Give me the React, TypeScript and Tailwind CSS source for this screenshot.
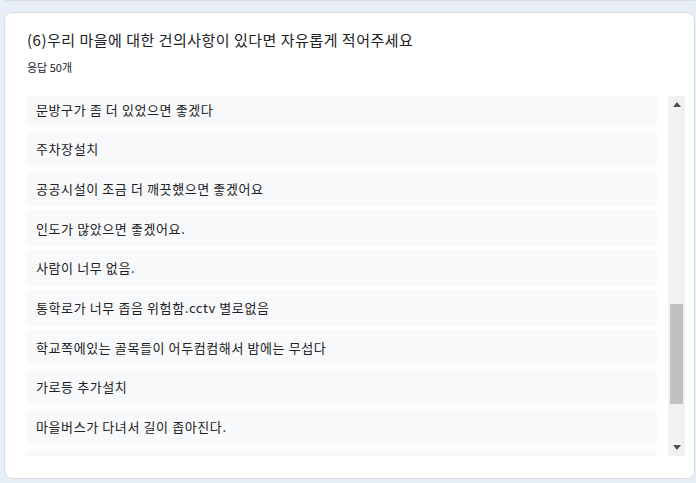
const answers: string[] = [
  '문방구가 좀 더 있었으면 좋겠다',
  '주차장설치',
  '공공시설이 조금 더 깨끗했으면 좋겠어요',
  '인도가 많았으면 좋겠어요.',
  '사람이 너무 없음.',
  '통학로가 너무 좁음 위험함.cctv 별로없음',
  '학교쪽에있는 골목들이 어두컴컴해서 밤에는 무섭다',
  '가로등 추가설치',
  '마을버스가 다녀서 길이 좁아진다.',
  '놀이터가 더 있었으면 좋겠다',
];

const ArrowUp = () => (
  <svg width="8" height="5" viewBox="0 0 8 5">
    <path d="M0 5 L4 0 L8 5 Z" fill="#505050" />
  </svg>
);

const ArrowDown = () => (
  <svg width="8" height="5" viewBox="0 0 8 5">
    <path d="M0 0 L8 0 L4 5 Z" fill="#505050" />
  </svg>
);

export default function App() {
  return (
    <div
      className="w-full h-[483px] overflow-hidden bg-[#e8eef7] pl-[4px] pr-[1px] text-[#202124]"
      style={{ fontFamily: '"Noto Sans CJK KR", "Noto Sans", sans-serif' }}
    >
      {/* 이전 카드 하단 */}
      <div className="h-[2px] -mt-[1px] bg-white border-b border-x border-[#dadce0] rounded-b-lg" />

      <div className="mt-[11px] h-[467px] bg-white border border-[#dadce0] rounded-lg pt-[17px] pl-[22px] pr-[9px] flex flex-col">
        <h2 className="text-[15px] leading-[20px] tracking-[0.5px]">(6)우리 마을에 대한 건의사항이 있다면 자유롭게 적어주세요</h2>
        <p className="mt-[9px] text-[11px] leading-[16px]">응답 50개</p>

        <div className="mt-[21px] flex h-[360px]">
          <div className="flex-1 overflow-hidden">
            <div className="-mt-[4.6px] flex flex-col gap-[4px]">
              {answers.map((text, i) => (
                <div
                  key={i}
                  className="h-[35.7px] shrink-0 flex items-center pl-[9px] bg-[#f8f9fa] rounded text-[13px] tracking-[0.6px]"
                >
                  {text}
                </div>
              ))}
            </div>
          </div>

          {/* 스크롤바 */}
          <div className="ml-[11px] w-[17px] bg-[#f1f1f1] flex flex-col">
            <div className="h-[17px] flex items-center justify-center">
              <ArrowUp />
            </div>
            <div className="mt-[191px] mx-[2px] h-[100px] bg-[#c1c1c1]" />
            <div className="flex-1" />
            <div className="h-[17px] flex items-center justify-center">
              <ArrowDown />
            </div>
          </div>
        </div>
      </div>
    </div>
  );
}
